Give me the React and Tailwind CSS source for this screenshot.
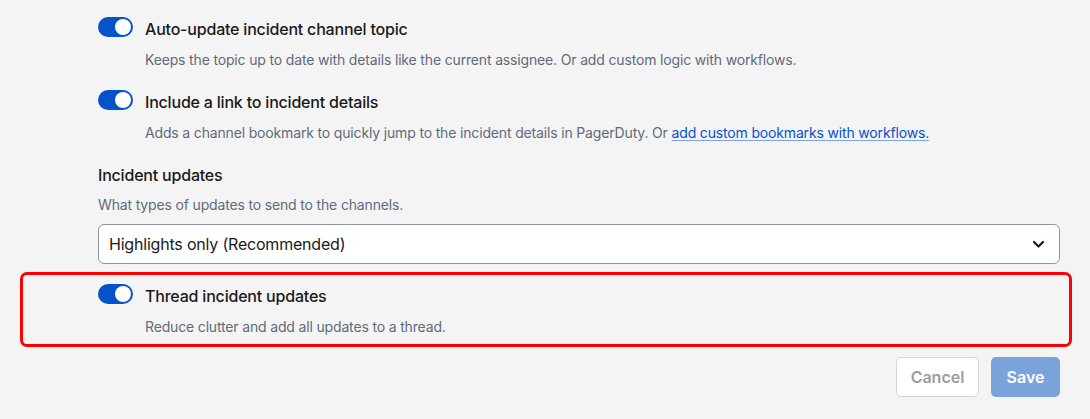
import React from "react";

function Toggle() {
  return (
    <div className="mt-[2px] w-[35px] h-[20px] rounded-full bg-[#0553c9] flex items-center justify-end pr-[2px] shrink-0">
      <div className="w-[16px] h-[16px] rounded-full bg-white" />
    </div>
  );
}

function ToggleItem({ title, children }) {
  return (
    <div>
      <div className="flex items-start gap-3">
        <Toggle />
        <span className="text-[16px] leading-[28px] font-medium tracking-[-0.2px] text-[#1a1a1a]">{title}</span>
      </div>
      <p className="mt-[7px] ml-[47px] text-[14px] leading-5 tracking-[-0.16px] text-[#5f6b7d]">{children}</p>
    </div>
  );
}

export default function App() {
  return (
    <div
      className="w-[1090px] h-[419px] bg-[#f4f4f4] overflow-hidden"
      style={{ fontFamily: "Inter, 'Noto Sans', sans-serif" }}
    >
      <div className="ml-[98px] w-[962px] pt-[15px]">
        <ToggleItem title="Auto-update incident channel topic">
          Keeps the topic up to date with details like the current assignee. Or add custom logic with workflows.
        </ToggleItem>
        <div className="mt-[18px]">
          <ToggleItem title="Include a link to incident details">
            Adds a channel bookmark to quickly jump to the incident details in PagerDuty. Or{" "}
            <a className="text-[#0550d0] underline decoration-[#7fa3e4] underline-offset-2">
              add custom bookmarks with workflows.
            </a>
          </ToggleItem>
        </div>
        <h3 className="mt-[20px] text-[16px] leading-6 font-medium tracking-[-0.2px] text-[#1a1a1a]">Incident updates</h3>
        <p className="mt-2 text-[14px] leading-5 tracking-[-0.16px] text-[#5f6b7d]">What types of updates to send to the channels.</p>
        <div className="mt-[9px] h-[40px] bg-white border border-[#8d96a4] rounded-[6px] flex items-center justify-between pl-[10px] pr-[14px]">
          <span className="text-[16px] tracking-[-0.2px] text-[#1a1a1a]">Highlights only (Recommended)</span>
          <svg width="13" height="9" viewBox="0 0 13 9" fill="none">
            <path d="M2 2l4.5 4.5L11 2" stroke="#1a1a1a" strokeWidth="2.2" strokeLinecap="round" strokeLinejoin="round" />
          </svg>
        </div>
        <div className="mt-2 ml-[-78px] mr-[-12px] border-[3px] border-[#ff0000] rounded-[7px] pl-[75px] pt-[7px] pb-[7px]">
          <ToggleItem title="Thread incident updates">
            Reduce clutter and add all updates to a thread.
          </ToggleItem>
        </div>
        <div className="mt-[10px] flex justify-end gap-3">
          <button className="h-[40px] w-[83px] bg-white border border-[#d3d6db] rounded-[5px] text-[16px] font-semibold text-[#9b9da1]">
            Cancel
          </button>
          <button className="h-[40px] w-[69px] bg-[#7ba3db] rounded-[5px] text-[16px] font-semibold text-white">
            Save
          </button>
        </div>
      </div>
    </div>
  );
}
